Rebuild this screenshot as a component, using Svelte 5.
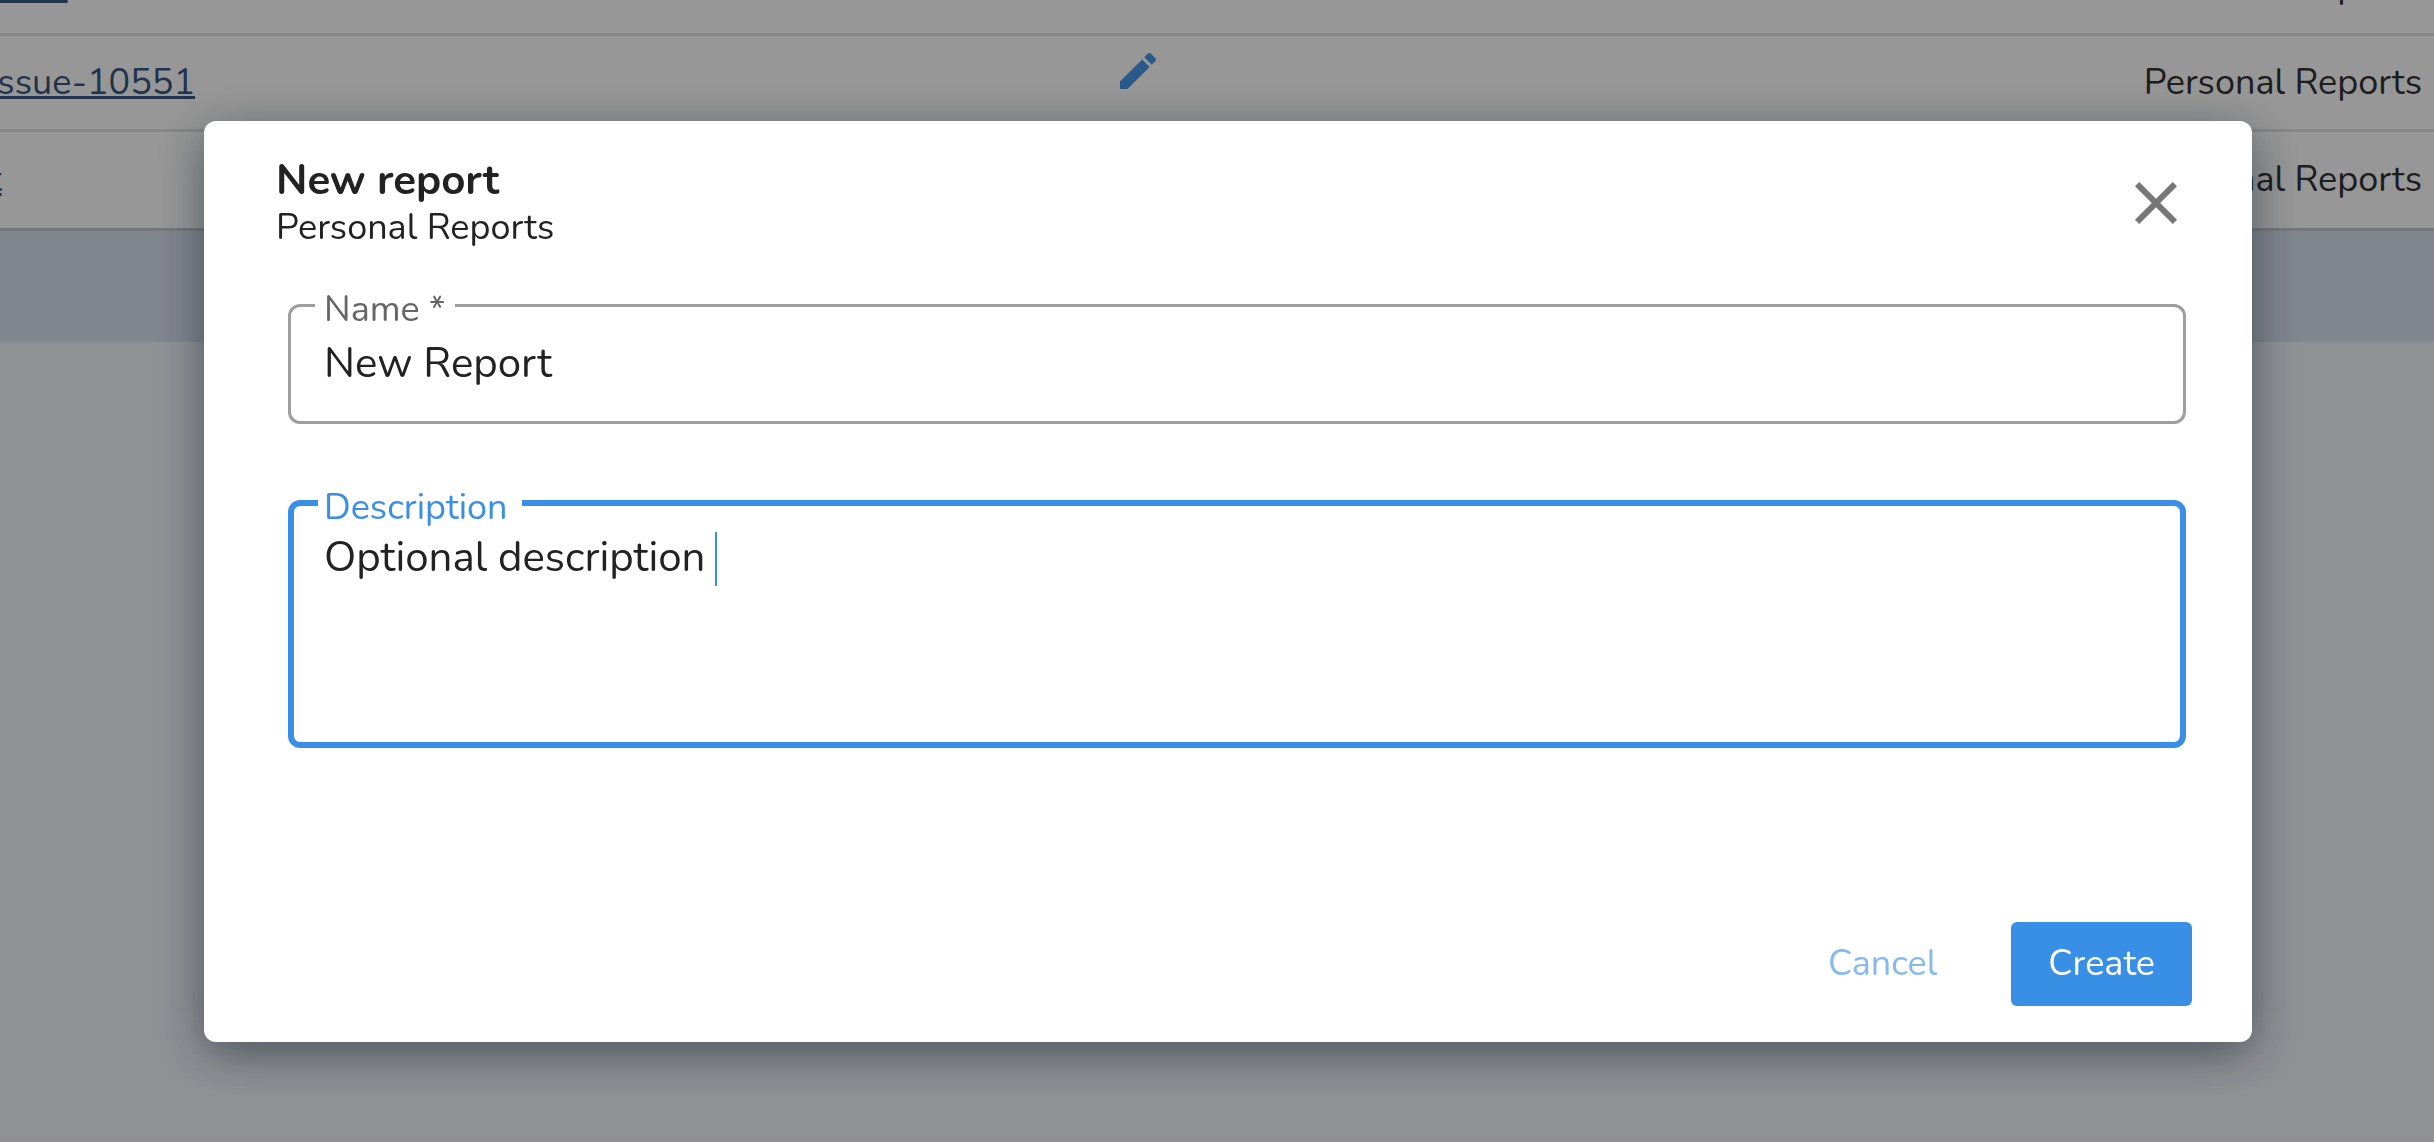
<script lang="ts">
    type Row = { name: string; folder: string };

    const rows: Row[] = [
        {name: 'tests', folder: 'Personal Reports'},
        {name: 'issue-10551', folder: 'Personal Reports'},
        {name: 't', folder: 'Personal Reports'}
    ];

    let name = 'New Report';
    let description = 'Optional description ';
</script>

<main class="page">
    <table class="reports">
        <tbody>
        {#each rows as row, i}
            <tr>
                <td class="name"><a href="#report">{row.name}</a></td>
                <td class="edit">
                    {#if i === 1}
                        <button aria-label="Edit" type="button">
                            <svg height="48" viewBox="0 0 24 24" width="48">
                                <path d="M3 17.25V21h3.75L17.81 9.94l-3.75-3.75L3 17.25zM20.71 7.04a1 1 0 0 0 0-1.41l-2.34-2.34a1 1 0 0 0-1.41 0l-1.83 1.83 3.75 3.75 1.83-1.83z"
                                      fill="currentColor"/>
                            </svg>
                        </button>
                    {/if}
                </td>
                <td class="folder">{row.folder}</td>
            </tr>
        {/each}
        </tbody>
    </table>
    <div class="table-footer"></div>
</main>

<div class="backdrop">
    <div aria-labelledby="dialog-title" aria-modal="true" class="dialog" role="dialog">
        <header>
            <div>
                <h1 id="dialog-title">New report</h1>
                <p>Personal Reports</p>
            </div>
            <button aria-label="Close" class="close" type="button">
                <svg height="72" viewBox="0 0 24 24" width="72">
                    <path d="M19 6.41L17.59 5 12 10.59 6.41 5 5 6.41 10.59 12 5 17.59 6.41 19 12 13.41 17.59 19 19 17.59 13.41 12z"
                          fill="currentColor"/>
                </svg>
            </button>
        </header>

        <form on:submit|preventDefault>
            <div class="field">
                <label for="name">Name *</label>
                <input bind:value={name} id="name" type="text"/>
            </div>

            <div class="field focused">
                <label for="description">Description</label>
                <textarea bind:value={description} id="description"></textarea>
                <!-- Mirrors the text so the caret sits at its end -->
                <div aria-hidden="true" class="mirror"><span>{description}</span><i class="caret"></i></div>
            </div>

            <footer>
                <button class="cancel" type="button">Cancel</button>
                <button class="create" type="submit">Create</button>
            </footer>
        </form>
    </div>
</div>

<style>
    :global(body) {
        margin: 0;
        background: #f0f2f8;
        font-family: Nunito, Lato, "Open Sans", sans-serif;
        font-size: 36px;
        line-height: 48px;
        color: #222;
    }

    button, input, textarea {
        box-sizing: border-box;
        margin: 0;
        padding: 0;
        border: 0;
        background: none;
        font: inherit;
        color: inherit;
    }

    .page {
        height: 100vh;
        overflow: hidden;
    }

    /* Scrolled a little down and to the right */
    .reports {
        width: calc(100% + 11px);
        margin: -60px 0 0 -11px;
        border-collapse: separate;
        border-spacing: 0;
        table-layout: fixed;
        background: #fcfcfc;
    }

    td {
        box-sizing: border-box;
        height: 96px;
        padding: 0;
        border-bottom: 3px solid #dfdfdf;
        white-space: nowrap;
    }

    tr:last-child td {
        height: 99px;
        border-color: #c4c8ce;
    }

    .name {
        width: 1125px;
    }

    .name a {
        color: #38587e;
        text-decoration-thickness: 3px;
        text-underline-offset: 2px;
        text-decoration-skip-ink: none;
    }

    .edit button {
        display: block;
        margin-bottom: 24px;
        height: 48px;
        color: #4696e8;
    }

    .folder {
        padding-right: 12px;
        text-align: right;
        color: #333;
    }

    .table-footer {
        height: 111px;
        background: #d9dfee;
    }

    .backdrop {
        position: fixed;
        inset: 0;
        display: flex;
        align-items: flex-start;
        box-sizing: border-box;
        padding: 121px 182px 100px 204px;
        background: rgba(0, 0, 0, 0.4);
    }

    .dialog {
        flex: 1;
        border-radius: 12px;
        background: #fff;
        box-shadow: 0 12px 48px rgba(0, 18, 30, 0.48);
    }

    header {
        display: flex;
        justify-content: space-between;
        padding: 37px 60px 0 72px;
    }

    h1 {
        margin: 0;
        font-size: 42px;
        font-weight: 700;
        line-height: 46px;
    }

    p {
        margin: 0;
    }

    .close {
        height: 72px;
        margin-top: 9px;
        color: #777;
    }

    form {
        padding: 52px 60px 36px 84px;
    }

    .field {
        position: relative;
        box-sizing: border-box;
        margin-right: 6px;
        border: 3px solid #9e9e9e;
        border-radius: 12px;
    }

    .field label {
        position: absolute;
        top: -21px;
        left: 24px;
        padding: 0 10px 0 9px;
        background: #fff;
        color: #666;
    }

    .field input {
        display: block;
        width: 100%;
        height: 114px;
        padding: 0 33px 2px;
        font-size: 42px;
        outline: none;
    }

    .focused {
        margin-top: 76px;
        border: 6px solid #398ee6;
    }

    .focused label {
        top: -22px;
        padding: 0 14px 0 6px;
        color: #398ee6;
    }

    textarea {
        display: block;
        width: 100%;
        height: 236px;
        padding: 25px 30px;
        font-size: 42px;
        line-height: 54px;
        resize: none;
        outline: none;
    }

    .mirror {
        position: absolute;
        top: 26px;
        left: 29px;
        display: flex;
        font-size: 42px;
        line-height: 54px;
        white-space: pre;
        pointer-events: none;
    }

    .mirror span {
        visibility: hidden;
    }

    .caret {
        width: 2px;
        background: #398ee6;
    }

    footer {
        display: flex;
        justify-content: flex-end;
        gap: 37px;
        margin-top: 174px;
    }

    footer button {
        height: 84px;
        padding: 0 37px;
        border-radius: 6px;
    }

    .cancel {
        color: #85b9f0;
    }

    .create {
        background: #398ee6;
        color: #fff;
    }
</style>
